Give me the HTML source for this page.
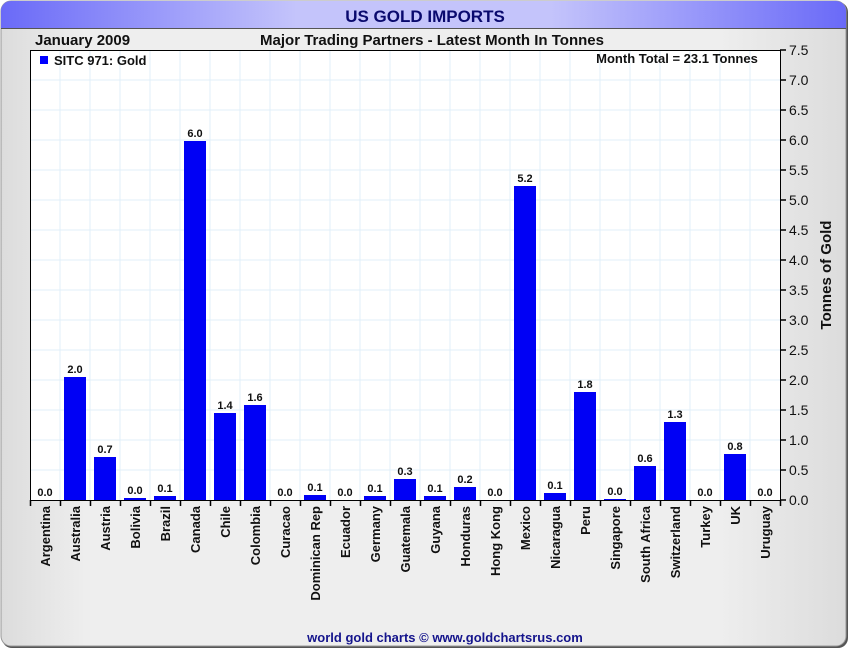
<!DOCTYPE html>
<html><head><meta charset="utf-8"><style>
html,body{margin:0;padding:0;width:850px;height:650px;overflow:hidden;background:#fff}
svg{display:block;font-family:"Liberation Sans",Arial,sans-serif}
</style></head><body>
<svg width="850" height="650" viewBox="0 0 850 650" xmlns="http://www.w3.org/2000/svg">
<defs>
<linearGradient id="tb" x1="0" x2="1" y1="0" y2="0">
<stop offset="0" stop-color="#6a6af8"/><stop offset="0.35" stop-color="#c4c4fb"/><stop offset="0.65" stop-color="#c4c4fb"/><stop offset="1" stop-color="#6a6af8"/></linearGradient>
<linearGradient id="bg" x1="0" x2="1" y1="0" y2="0">
<stop offset="0" stop-color="#dcdcdc"/><stop offset="0.1" stop-color="#eeeeee"/><stop offset="0.85" stop-color="#eeeeee"/><stop offset="1" stop-color="#dcdcdc"/></linearGradient>
</defs>
<rect x="2" y="2" width="846" height="646" rx="10" fill="#555"/>
<rect x="1" y="1" width="845" height="645" rx="10" fill="url(#bg)" stroke="#999" stroke-width="1"/>
<path d="M1 28 V11 A10 10 0 0 1 11 1 H836 A10 10 0 0 1 846 11 V28 Z" fill="url(#tb)"/>
<line x1="1" y1="28.5" x2="846" y2="28.5" stroke="#555" stroke-width="1"/>
<text x="425" y="22" text-anchor="middle" font-size="17" font-weight="bold" fill="#0a0a6e">US GOLD IMPORTS</text>
<text x="35" y="45" font-size="15" font-weight="bold" fill="#111">January 2009</text>
<text x="432" y="45" text-anchor="middle" font-size="15" font-weight="bold" fill="#111">Major Trading Partners - Latest Month In Tonnes</text>
<rect x="30" y="50" width="750" height="450" fill="#fff"/>
<g stroke="#e0eff9" stroke-width="1">
<path d="M60 50V500M90 50V500M120 50V500M150 50V500M180 50V500M210 50V500M240 50V500M270 50V500M300 50V500M330 50V500M360 50V500M390 50V500M420 50V500M450 50V500M480 50V500M510 50V500M540 50V500M570 50V500M600 50V500M630 50V500M660 50V500M690 50V500M720 50V500M750 50V500"/>
<path d="M30 80H780M30 110H780M30 140H780M30 170H780M30 200H780M30 230H780M30 260H780M30 290H780M30 320H780M30 350H780M30 380H780M30 410H780M30 440H780M30 470H780"/>
</g>
<rect x="30.5" y="50.5" width="750" height="450" fill="none" stroke="#000" stroke-width="1"/>
<rect x="40" y="56" width="8" height="8" fill="#00f"/>
<text x="54" y="65" font-size="13" font-weight="bold" fill="#111">SITC 971: Gold</text>
<text x="677" y="63" text-anchor="middle" font-size="13" font-weight="bold" fill="#111">Month Total = 23.1 Tonnes</text>
<g fill="#0000f5">
<rect x="64" y="377" width="22" height="123"/>
<rect x="94" y="457" width="22" height="43"/>
<rect x="124" y="498" width="22" height="2"/>
<rect x="154" y="496" width="22" height="4"/>
<rect x="184" y="141" width="22" height="359"/>
<rect x="214" y="413" width="22" height="87"/>
<rect x="244" y="405" width="22" height="95"/>
<rect x="304" y="495" width="22" height="5"/>
<rect x="364" y="496" width="22" height="4"/>
<rect x="394" y="479" width="22" height="21"/>
<rect x="424" y="496" width="22" height="4"/>
<rect x="454" y="487" width="22" height="13"/>
<rect x="514" y="186" width="22" height="314"/>
<rect x="544" y="493" width="22" height="7"/>
<rect x="574" y="392" width="22" height="108"/>
<rect x="604" y="499" width="22" height="1"/>
<rect x="634" y="466" width="22" height="34"/>
<rect x="664" y="422" width="22" height="78"/>
<rect x="724" y="454" width="22" height="46"/>
</g>
<g font-size="11" font-weight="bold" fill="#111" text-anchor="middle">
<text x="45" y="496">0.0</text><text x="75" y="373">2.0</text><text x="105" y="453">0.7</text><text x="135" y="494">0.0</text><text x="165" y="492">0.1</text><text x="195" y="137">6.0</text><text x="225" y="409">1.4</text><text x="255" y="401">1.6</text><text x="285" y="496">0.0</text><text x="315" y="491">0.1</text><text x="345" y="496">0.0</text><text x="375" y="492">0.1</text><text x="405" y="475">0.3</text><text x="435" y="492">0.1</text><text x="465" y="483">0.2</text><text x="495" y="496">0.0</text><text x="525" y="182">5.2</text><text x="555" y="489">0.1</text><text x="585" y="388">1.8</text><text x="615" y="495">0.0</text><text x="645" y="462">0.6</text><text x="675" y="418">1.3</text><text x="705" y="496">0.0</text><text x="735" y="450">0.8</text><text x="765" y="496">0.0</text>
</g>
<g stroke="#000" stroke-width="1.5">
<path d="M30.5 500V506M60.5 500V506M90.5 500V506M120.5 500V506M150.5 500V506M180.5 500V506M210.5 500V506M240.5 500V506M270.5 500V506M300.5 500V506M330.5 500V506M360.5 500V506M390.5 500V506M420.5 500V506M450.5 500V506M480.5 500V506M510.5 500V506M540.5 500V506M570.5 500V506M600.5 500V506M630.5 500V506M660.5 500V506M690.5 500V506M720.5 500V506M750.5 500V506M780.5 500V506"/>
<path d="M780 50H786M780 80H786M780 110H786M780 140H786M780 170H786M780 200H786M780 230H786M780 260H786M780 290H786M780 320H786M780 350H786M780 380H786M780 410H786M780 440H786M780 470H786M780 500H786"/>
</g>
<g font-size="14" fill="#111">
<text x="789" y="55">7.5</text><text x="789" y="85">7.0</text><text x="789" y="115">6.5</text><text x="789" y="145">6.0</text><text x="789" y="175">5.5</text><text x="789" y="205">5.0</text><text x="789" y="235">4.5</text><text x="789" y="265">4.0</text><text x="789" y="295">3.5</text><text x="789" y="325">3.0</text><text x="789" y="355">2.5</text><text x="789" y="385">2.0</text><text x="789" y="415">1.5</text><text x="789" y="445">1.0</text><text x="789" y="475">0.5</text><text x="789" y="505">0.0</text>
</g>
<text transform="translate(831,275) rotate(-90)" text-anchor="middle" font-size="15" font-weight="bold" fill="#111">Tonnes of Gold</text>
<g font-size="13" font-weight="bold" fill="#111" text-anchor="end">
<text transform="translate(50,506) rotate(-90)">Argentina</text>
<text transform="translate(80,506) rotate(-90)">Australia</text>
<text transform="translate(110,506) rotate(-90)">Austria</text>
<text transform="translate(140,506) rotate(-90)">Bolivia</text>
<text transform="translate(170,506) rotate(-90)">Brazil</text>
<text transform="translate(200,506) rotate(-90)">Canada</text>
<text transform="translate(230,506) rotate(-90)">Chile</text>
<text transform="translate(260,506) rotate(-90)">Colombia</text>
<text transform="translate(290,506) rotate(-90)">Curacao</text>
<text transform="translate(320,506) rotate(-90)">Dominican Rep</text>
<text transform="translate(350,506) rotate(-90)">Ecuador</text>
<text transform="translate(380,506) rotate(-90)">Germany</text>
<text transform="translate(410,506) rotate(-90)">Guatemala</text>
<text transform="translate(440,506) rotate(-90)">Guyana</text>
<text transform="translate(470,506) rotate(-90)">Honduras</text>
<text transform="translate(500,506) rotate(-90)">Hong Kong</text>
<text transform="translate(530,506) rotate(-90)">Mexico</text>
<text transform="translate(560,506) rotate(-90)">Nicaragua</text>
<text transform="translate(590,506) rotate(-90)">Peru</text>
<text transform="translate(620,506) rotate(-90)">Singapore</text>
<text transform="translate(650,506) rotate(-90)">South Africa</text>
<text transform="translate(680,506) rotate(-90)">Switzerland</text>
<text transform="translate(710,506) rotate(-90)">Turkey</text>
<text transform="translate(740,506) rotate(-90)">UK</text>
<text transform="translate(770,506) rotate(-90)">Uruguay</text>
</g>
<text x="445" y="642" text-anchor="middle" font-size="13" font-weight="bold" fill="#14148c">world gold charts © www.goldchartsrus.com</text>
</svg>
</body></html>
